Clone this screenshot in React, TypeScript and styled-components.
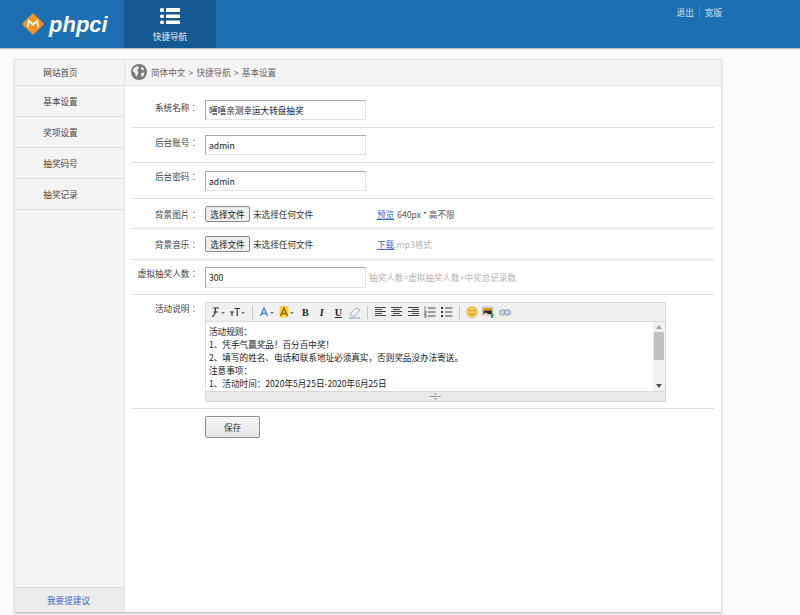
import { createGlobalStyle, styled } from "styled-components";

const GlobalStyle = createGlobalStyle`
    html, body {
        margin: 0;
        height: 100%;
        overflow: hidden;
        background-color: #fbfbfb;
        font-family: "Noto Sans CJK SC", "Open Sans", sans-serif;
        font-size: 8.6px;
        color: #333;
    }
    * { box-sizing: border-box; }
`;

const Page = styled.div`
    display: flex;
    flex-direction: column;
    height: 615px;
`;

const Header = styled.header`
    display: flex;
    height: 48px;
    flex: none;
    background-color: #1c6fb0;
    box-shadow: 0 1px 1px #bbb;
`;

const LogoBox = styled.div`
    display: flex;
    align-items: center;
    width: 124px;
    padding-left: 21px;
    gap: 4px;
`;

const LogoText = styled.span`
    font-family: "Liberation Sans", sans-serif;
    font-weight: 700;
    font-style: italic;
    font-size: 22px;
    color: #fff;
    margin-top: 2px;
`;

const NavTab = styled.div`
    display: flex;
    flex-direction: column;
    align-items: center;
    width: 92px;
    padding-top: 8px;
    gap: 6px;
    background-color: #14598f;
    color: #e8f0f6;
`;

const TopLinks = styled.div`
    display: flex;
    align-items: flex-start;
    margin-left: auto;
    margin-right: 73px;
    padding-top: 6px;
    color: #cfe2f0;
`;

const TopLink = styled.a`
    padding: 0 5px;
    line-height: 12px;
    & + & {
        border-left: 1px solid #3f86bd;
    }
`;

const Panel = styled.div`
    display: flex;
    width: 708px;
    height: 554px;
    margin: 11px 0 0 14px;
    border: 1px solid #e3e3e3;
    border-bottom-color: #ccc;
    box-shadow: 0 1px 2px #ccc;
    background-color: #fff;
`;

const Sidebar = styled.aside`
    display: flex;
    flex-direction: column;
    width: 110px;
    flex: none;
    background-color: #f4f4f4;
    border-right: 1px solid #e3e3e3;
`;

const SideItem = styled.div<{ $height: number; $lift?: number }>`
    display: flex;
    align-items: center;
    justify-content: center;
    height: ${(p) => p.$height}px;
    padding-right: 18px;
    padding-bottom: ${(p) => p.$lift ?? 0}px;
    border-bottom: 1px solid #e0e0e0;
    color: #444;
`;

const SideFoot = styled.div`
    display: flex;
    align-items: center;
    justify-content: center;
    height: 25px;
    margin-top: auto;
    padding-right: 2px;
    border-top: 1px solid #ddd;
    background-color: #ececec;
    color: #3f66c0;
`;

const Content = styled.main`
    flex: 1;
    display: flex;
    flex-direction: column;
    min-width: 0;
`;

const Crumb = styled.div`
    display: flex;
    align-items: center;
    height: 26px;
    flex: none;
    gap: 4px;
    padding: 0 0 1px 6px;
    background-color: #f4f4f4;
    border-bottom: 1px solid #e3e3e3;
    color: #666;
    word-spacing: 1.2px;
`;

const Form = styled.div`
    display: flex;
    flex-direction: column;
    padding: 0 7px;
`;

const Row = styled.div<{ $height: number; $top?: boolean }>`
    display: grid;
    grid-template-columns: 66px 1fr;
    column-gap: 7px;
    height: ${(p) => p.$height}px;
    align-items: ${(p) => (p.$top ? "start" : "center")};
    padding-top: ${(p) => (p.$top ? 7 : 0)}px;
    border-bottom: 1px solid #dedede;
`;

const FirstRow = styled(Row)`
    padding-top: 14px;
    align-items: start;
`;

const Label = styled.div<{ $lift?: number; $drop?: number }>`
    margin-top: ${(p) => p.$drop ?? 0}px;
    margin-bottom: ${(p) => (p.$lift ?? 0) * 2}px;
    text-align: right;
    font-family: "Noto Sans CJK TC", "Open Sans", sans-serif;
    color: #444;
    white-space: nowrap;
`;

const Field = styled.div`
    display: flex;
    align-items: center;
    min-width: 0;
`;

const TextBox = styled.div<{ $height?: number }>`
    display: flex;
    align-items: center;
    width: 161px;
    height: ${(p) => p.$height ?? 20}px;
    padding-left: 3px;
    border: 1px solid #e2e2e2;
    border-top-color: #aaa;
    border-left-color: #aaa;
    color: #222;
    font-size: 8.6px;
`;

const FileButton = styled.button`
    width: 45px;
    height: 16px;
    padding: 0;
    background-color: #efefef;
    border: 1px solid #8a8a8a;
    border-radius: 2px;
    font: inherit;
    color: #222;
`;

const FileName = styled.span`
    width: 127px;
    padding-left: 3px;
    color: #333;
`;

const Link = styled.a`
    color: #3a6ad0;
    text-decoration: underline;
`;

const Plain = styled.span`
    color: #555;
    margin-left: 3px;
`;

const Hint = styled.span<{ $gap?: number }>`
    color: #b4b4b4;
    margin-left: ${(p) => p.$gap ?? 0}px;
    white-space: nowrap;
`;

const Editor = styled.div`
    width: 461px;
    height: 100px;
    border: 1px solid #d8d8d8;
    display: flex;
    flex-direction: column;
`;

const Toolbar = styled.div`
    display: flex;
    align-items: center;
    height: 19px;
    flex: none;
    padding-left: 2px;
    background-color: #f0f0f0;
    border-bottom: 1px solid #d8d8d8;
`;

const Tool = styled.span<{ $width?: number }>`
    display: flex;
    align-items: center;
    justify-content: center;
    width: ${(p) => p.$width ?? 16.5}px;
    height: 16px;
    flex: none;
    font-family: "Liberation Serif", serif;
    font-size: 10px;
    font-weight: 700;
    color: #222;
`;

const Sep = styled.span`
    width: 1px;
    height: 13px;
    margin: 0 4px;
    flex: none;
    background-color: #c4c4c4;
`;

const EditorBody = styled.div`
    display: flex;
    flex: 1;
    min-height: 0;
`;

const EditorText = styled.div`
    flex: 1;
    padding: 3px;
    line-height: 13px;
    color: #222;
    white-space: nowrap;
    overflow: hidden;
`;

const Scroll = styled.div`
    display: flex;
    flex-direction: column;
    align-items: center;
    width: 12px;
    flex: none;
    background-color: #f1f1f1;
    padding: 3px 0;
`;

const Thumb = styled.div`
    width: 10px;
    height: 28px;
    margin: 3px 0 auto;
    background-color: #c1c1c1;
`;

const ScrollArrow = styled.div<{ $down?: boolean; $dark?: boolean }>`
    width: 0;
    height: 0;
    border-left: 3px solid transparent;
    border-right: 3px solid transparent;
    ${(p) => (p.$down ? "border-top" : "border-bottom")}: 4px solid ${(p) => (p.$dark ? "#505050" : "#a3a3a3")};
`;

const ResizeBar = styled.div`
    display: flex;
    align-items: center;
    justify-content: center;
    height: 10px;
    flex: none;
    background-color: #eaeaea;
    border-top: 1px solid #d8d8d8;
`;

const SaveRow = styled.div`
    padding: 7px 0 0 73px;
`;

const SaveButton = styled.button`
    width: 55px;
    height: 22px;
    padding: 0;
    border: 1px solid #8c8c8c;
    border-radius: 2px;
    background: linear-gradient(#f8f8f8, #e4e4e4);
    font: inherit;
    color: #333;
`;

function Logo() {
    return (
        <svg width="24" height="24" viewBox="0 0 23 23">
            <rect x="4" y="4" width="15" height="15" rx="1" fill="#f7941d" transform="rotate(45 11.5 11.5)" />
            <path d="M6.5 14.5 L7.5 8.5 L11.5 12 L15.5 8.5 L16.5 14.5" fill="none" stroke="#fff" strokeWidth="1.8" />
        </svg>
    );
}

function ListIcon() {
    return (
        <svg width="20" height="16" viewBox="0 0 20 16" fill="#fff">
            <rect x="0" y="0" width="4" height="4" rx="1.5" />
            <rect x="6" y="0" width="14" height="4" rx="0.5" />
            <rect x="0" y="6.5" width="4" height="3.5" rx="1.5" />
            <rect x="6" y="6.5" width="14" height="3.5" rx="0.5" />
            <rect x="0" y="12.5" width="4" height="3.5" rx="1.5" />
            <rect x="6" y="12.5" width="14" height="3.5" rx="0.5" />
        </svg>
    );
}

function Globe() {
    return (
        <svg width="16" height="16" viewBox="0 0 16 16">
            <circle cx="8" cy="8" r="8" fill="#777" />
            <path d="M3 3.5 L7 2 L8 4 L6 6 L7.5 8 L6.5 11 L5 13 L4 9 L1.5 7 Z" fill="#eee" />
            <path d="M10 2.5 L13.5 5 L12 6.5 L10 5 Z M10 9 L13.5 8.5 L12.5 12 L10.5 13 Z" fill="#eee" />
        </svg>
    );
}

function Caret() {
    return <path d="M0 0 H4 L2 2 Z" fill="#777" transform="translate(12 7)" />;
}

function ToolFont() {
    return (
        <svg width="18" height="14" viewBox="0 0 18 14">
            <path d="M4 3 H10 M6.5 3 C6.5 7 6 11 3 11.5 M4.5 7 H9" fill="none" stroke="#333" strokeWidth="1.2" />
            <Caret />
        </svg>
    );
}

function ToolSize() {
    return (
        <svg width="18" height="14" viewBox="0 0 18 14">
            <path d="M1 7 H5 M3 7 V11 M5.5 3.5 H11 M8.2 3.5 V11" fill="none" stroke="#333" strokeWidth="1.2" />
            <Caret />
        </svg>
    );
}

function ToolColor({ color, bg }: { color: string; bg?: string }) {
    return (
        <svg width="18" height="14" viewBox="0 0 18 14">
            {bg ? <rect x="1.5" y="1" width="9" height="11.5" rx="2" fill={bg} /> : null}
            <path d="M2.5 11 L6 3 L9.5 11 M4 8.5 H8" fill="none" stroke={color} strokeWidth="1.4" />
            <Caret />
        </svg>
    );
}

function ToolAlign({ kind }: { kind: "left" | "center" | "right" }) {
    const [from, to] = kind === "left" ? [1, 8] : kind === "center" ? [3, 10] : [5, 12];
    return (
        <svg width="13" height="12" viewBox="0 0 13 12">
            <path
                d={`M1 1.5 H12 M${from} 3.5 H${to} M1 5.5 H12 M${from} 7.5 H${to} M1 9.5 H12`}
                fill="none"
                stroke="#444"
                strokeWidth="1"
            />
        </svg>
    );
}

function ToolList({ ordered }: { ordered?: boolean }) {
    return (
        <svg width="13" height="12" viewBox="0 0 13 12">
            <path d="M5 2 H12.5 M5 6 H12.5 M5 10 H12.5" stroke="#444" strokeWidth="1" fill="none" />
            {ordered ? (
                <path d="M2 0.5 V3.5 M1 5 H3 V7 H1 M1 8.5 H3 V11 H1" stroke="#444" strokeWidth="0.8" fill="none" />
            ) : (
                <path d="M1 2 H3 M1 6 H3 M1 10 H3" stroke="#333" strokeWidth="2" fill="none" />
            )}
        </svg>
    );
}

function ToolEraser() {
    return (
        <svg width="14" height="13" viewBox="0 0 14 13">
            <path d="M2 8 L8 2 L12 4 L6.5 10 H3.5 Z" fill="#eef1f6" stroke="#a4aec0" />
            <path d="M1 12 H12" stroke="#7d9ac4" />
        </svg>
    );
}

function ToolSmile() {
    return (
        <svg width="12" height="12" viewBox="0 0 12 12">
            <circle cx="6" cy="6" r="5.5" fill="#f5cd55" stroke="#e3a93a" strokeWidth="0.6" />
            <circle cx="4" cy="4.5" r="0.7" fill="#8a5a10" />
            <circle cx="8" cy="4.5" r="0.7" fill="#8a5a10" />
            <path d="M3 7 C4 9.3 8 9.3 9 7" stroke="#a36a14" strokeWidth="0.8" fill="none" />
        </svg>
    );
}

function ToolImage() {
    return (
        <svg width="13" height="12" viewBox="0 0 13 12">
            <rect x="0.5" y="1" width="10.5" height="8" fill="#ddd" stroke="#aaa" strokeWidth="0.6" />
            <rect x="1.5" y="2" width="8.5" height="2.5" fill="#e8950f" />
            <path d="M1.5 4.5 H10 V8 H6 L4 6.5 L1.5 8 Z" fill="#3a2a10" />
            <path d="M10 7 L12.5 9.5 H11 V12 H9 V9.5 H7.5 Z" fill="#3fa34d" />
        </svg>
    );
}

function ToolLink() {
    return (
        <svg width="12" height="7" viewBox="0 0 12 7">
            <rect x="0.6" y="1" width="6" height="5" rx="2.4" fill="#c9d3e2" stroke="#8ea3c4" strokeWidth="1.1" />
            <rect x="5.4" y="1" width="6" height="5" rx="2.4" fill="#c9d3e2" stroke="#8ea3c4" strokeWidth="1.1" />
        </svg>
    );
}

function Grip() {
    return (
        <svg width="11" height="7" viewBox="0 0 11 7">
            <path d="M0 3.5 H11" stroke="#999" />
            <path d="M4 1.5 L5.5 0 L7 1.5 Z M4 5.5 L5.5 7 L7 5.5 Z" fill="#888" />
        </svg>
    );
}

const sideItems = [
    { name: "网站首页", height: 26, lift: 2 },
    { name: "基本设置", height: 31 },
    { name: "奖项设置", height: 31 },
    { name: "抽奖码号", height: 31 },
    { name: "抽奖记录", height: 31 },
];

const rules = [
    "活动规则：",
    "1、凭手气赢奖品！百分百中奖！",
    "2、填写的姓名、电话和联系地址必须真实，否则奖品没办法寄送。",
    "注意事项：",
    "1、活动时间：2020年5月25日-2020年6月25日",
];

export default function App() {
    return (
        <Page>
            <GlobalStyle />
            <Header>
                <LogoBox>
                    <Logo />
                    <LogoText>phpci</LogoText>
                </LogoBox>
                <NavTab>
                    <ListIcon />
                    快捷导航
                </NavTab>
                <TopLinks>
                    <TopLink>退出</TopLink>
                    <TopLink>宽版</TopLink>
                </TopLinks>
            </Header>
            <Panel>
                <Sidebar>
                    {sideItems.map((item) => (
                        <SideItem key={item.name} $height={item.height} $lift={item.lift}>
                            {item.name}
                        </SideItem>
                    ))}
                    <SideFoot>我要提建议</SideFoot>
                </Sidebar>
                <Content>
                    <Crumb>
                        <Globe />
                        简体中文 &gt; 快捷导航 &gt; 基本设置
                    </Crumb>
                    <Form>
                        <FirstRow $height={42}>
                            <Label $drop={1}>系统名称：</Label>
                            <Field>
                                <TextBox>嘻嘻亲测幸运大转盘抽奖</TextBox>
                            </Field>
                        </FirstRow>
                        <Row $height={35}>
                            <Label $lift={3}>后台账号：</Label>
                            <Field>
                                <TextBox>admin</TextBox>
                            </Field>
                        </Row>
                        <Row $height={36}>
                            <Label $lift={4.5}>后台密码：</Label>
                            <Field>
                                <TextBox>admin</TextBox>
                            </Field>
                        </Row>
                        <Row $height={30}>
                            <Label>背景图片：</Label>
                            <Field>
                                <FileButton>选择文件</FileButton>
                                <FileName>未选择任何文件</FileName>
                                <Link>预览</Link>
                                <Plain>640px * 高不限</Plain>
                            </Field>
                        </Row>
                        <Row $height={31}>
                            <Label>背景音乐：</Label>
                            <Field>
                                <FileButton>选择文件</FileButton>
                                <FileName>未选择任何文件</FileName>
                                <Link>下载</Link>
                                <Hint>.mp3格式</Hint>
                            </Field>
                        </Row>
                        <Row $height={35}>
                            <Label $lift={4}>虚拟抽奖人数：</Label>
                            <Field>
                                <TextBox $height={21}>300</TextBox>
                                <Hint $gap={3}>抽奖人数=虚拟抽奖人数+中奖总记录数</Hint>
                            </Field>
                        </Row>
                        <Row $height={114} $top>
                            <Label>活动说明：</Label>
                            <Editor>
                                <Toolbar>
                                    <Tool $width={20}><ToolFont /></Tool>
                                    <Tool $width={20}><ToolSize /></Tool>
                                    <Sep />
                                    <Tool $width={19}><ToolColor color="#4a86d8" /></Tool>
                                    <Tool $width={21}><ToolColor color="#8a6a00" bg="#fdd13a" /></Tool>
                                    <Tool>B</Tool>
                                    <Tool><i>I</i></Tool>
                                    <Tool><u>U</u></Tool>
                                    <Tool><ToolEraser /></Tool>
                                    <Sep />
                                    <Tool><ToolAlign kind="left" /></Tool>
                                    <Tool><ToolAlign kind="center" /></Tool>
                                    <Tool><ToolAlign kind="right" /></Tool>
                                    <Tool><ToolList ordered /></Tool>
                                    <Tool $width={17}><ToolList /></Tool>
                                    <Sep />
                                    <Tool><ToolSmile /></Tool>
                                    <Tool><ToolImage /></Tool>
                                    <Tool><ToolLink /></Tool>
                                </Toolbar>
                                <EditorBody>
                                    <EditorText>
                                        {rules.map((line) => (
                                            <div key={line}>{line}</div>
                                        ))}
                                    </EditorText>
                                    <Scroll>
                                        <ScrollArrow />
                                        <Thumb />
                                        <ScrollArrow $down $dark />
                                    </Scroll>
                                </EditorBody>
                                <ResizeBar>
                                    <Grip />
                                </ResizeBar>
                            </Editor>
                        </Row>
                        <SaveRow>
                            <SaveButton>保存</SaveButton>
                        </SaveRow>
                    </Form>
                </Content>
            </Panel>
        </Page>
    );
}
